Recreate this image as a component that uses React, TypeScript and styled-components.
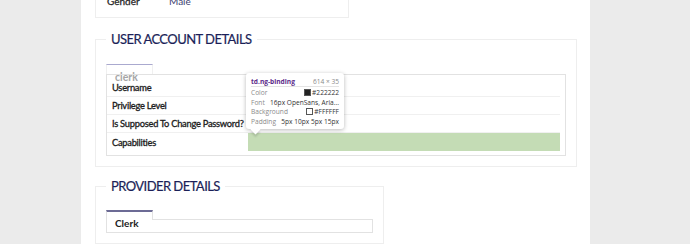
import React from 'react';
import styled, { createGlobalStyle } from 'styled-components';

const GlobalStyle = createGlobalStyle`
    html, body {
        margin: 0;
        padding: 0;
        background: #ebebeb;
        font-family: Lato, "Open Sans", "Liberation Sans", sans-serif;
        overflow: hidden;
    }
`;

const Page = styled.div`
    display: flex;
    width: 690px;
    height: 244px;
    overflow: hidden;
`;

const Gutter = styled.div<{ $w: number }>`
    width: ${(p) => p.$w}px;
    flex-shrink: 0;
    background: #ebebeb;
`;

const Main = styled.div`
    width: 509px;
    flex-shrink: 0;
    background: #ffffff;
    padding-left: 14px;
    box-sizing: border-box;
    display: flex;
    flex-direction: column;
`;

const InfoCard = styled.div`
    width: 254px;
    height: 37px;
    margin-top: -15px;
    border: 1px solid #eeeeee;
    border-top: none;
    box-sizing: border-box;
    display: flex;
    align-items: center;
    padding-left: 11px;
    font-size: 10px;
`;

const InfoLabel = styled.span`
    width: 62px;
    color: #222222;
    -webkit-text-stroke: 0.25px #222222;
`;

const InfoValue = styled.span`
    color: #3c4170;
`;

const Section = styled.fieldset<{ $w: number; $mt: number }>`
    width: ${(p) => p.$w}px;
    margin: ${(p) => p.$mt}px 0 0 0;
    padding: 0 10px 10px 10px;
    border: 1px solid #eeeeee;
    box-sizing: border-box;
    min-width: 0;
`;

const Legend = styled.legend`
    margin-left: 0;
    padding: 0 5px;
    font-size: 13px;
    line-height: 18px;
    color: #1b1f58;
    text-transform: uppercase;
    letter-spacing: -0.55px;
    -webkit-text-stroke: 0.2px #1b1f58;
`;

const TabStrip = styled.div<{ $mt: number }>`
    display: flex;
    margin-top: ${(p) => p.$mt}px;
    height: 10px;
`;

const Tab = styled.div<{ $active?: boolean }>`
    width: 47px;
    box-sizing: border-box;
    border-top: ${(p) => (p.$active ? '2px solid #6c6b95' : '1px solid #aaa9cf')};
    border-left: 1px solid ${(p) => (p.$active ? '#e2e2e2' : '#f0f0f0')};
    border-right: 1px solid ${(p) => (p.$active ? '#e2e2e2' : '#f0f0f0')};
    position: relative;
`;

const TabLabel = styled.span<{ $active?: boolean }>`
    position: absolute;
    left: 8px;
    top: ${(p) => (p.$active ? '5px' : '6px')};
    font-size: ${(p) => (p.$active ? '10px' : '10.5px')};
    line-height: 12px;
    font-weight: 700;
    color: ${(p) => (p.$active ? '#222222' : '#a6a6a6')};
    white-space: nowrap;
`;

const TabFiller = styled.div<{ $line?: boolean }>`
    flex: 1;
    border-bottom: ${(p) => (p.$line ? '1px solid #e2e2e2' : 'none')};
`;

const DetailBox = styled.div`
    position: relative;
    border: 1px solid #e2e2e2;
    padding: 4px 5px 4px 0;
`;

const Row = styled.div<{ $last?: boolean }>`
    display: grid;
    grid-template-columns: 141px 1fr;
    height: 18px;
    border-bottom: ${(p) => (p.$last ? 'none' : '1px solid #f0f0f0')};
    box-sizing: border-box;
`;

const Label = styled.div`
    padding-left: 5px;
    display: flex;
    align-items: center;
    font-size: 9.3px;
    letter-spacing: -0.25px;
    color: #1a1a1a;
    -webkit-text-stroke: 0.3px #1a1a1a;
    white-space: nowrap;
`;

const Value = styled.div<{ $highlight?: boolean }>`
    background: ${(p) => (p.$highlight ? '#c4dcb5' : 'transparent')};
`;

const ProviderBox = styled.div`
    height: 12px;
    border: 1px solid #e2e2e2;
    border-top: none;
`;

const Tooltip = styled.div`
    position: absolute;
    left: 139px;
    top: -2px;
    width: 98px;
    height: 56px;
    box-sizing: border-box;
    background: #ffffff;
    border-radius: 3px;
    box-shadow: 0 1px 4px rgba(0, 0, 0, 0.28);
    padding: 3px 5px 0 5px;
    font-family: "Open Sans", "DejaVu Sans", sans-serif;
    font-size: 6.6px;
    z-index: 2;

    &::after {
        content: '';
        position: absolute;
        left: 6px;
        bottom: -4px;
        width: 7px;
        height: 7px;
        background: #ffffff;
        transform: rotate(45deg);
        box-shadow: 2px 2px 2px rgba(0, 0, 0, 0.12);
    }
`;

const TipHead = styled.div`
    display: flex;
    justify-content: space-between;
    align-items: center;
    height: 10px;
    border-bottom: 1px solid #e4e4e4;
    margin-bottom: 1px;
`;

const TipTag = styled.span`
    font-weight: 700;
    color: #5b2a8a;
`;

const TipSize = styled.span`
    color: #8a8a8a;
`;

const TipRow = styled.div`
    display: flex;
    justify-content: space-between;
    align-items: center;
    height: 9.6px;
    color: #8a8a8a;
`;

const TipVal = styled.span`
    color: #333333;
    display: flex;
    align-items: center;
    gap: 1px;
`;

const Swatch = styled.span<{ $color: string }>`
    display: inline-block;
    width: 5px;
    height: 5px;
    background: ${(p) => p.$color};
    border: 0.5px solid #555;
`;

const accountRows = [
    'Username',
    'Privilege Level',
    'Is Supposed To Change Password?',
    'Capabilities',
];

const App = () => {
    return (
        <>
            <GlobalStyle />
            <Page>
                <Gutter $w={81} />
                <Main>
                    <InfoCard>
                        <InfoLabel>Gender</InfoLabel>
                        <InfoValue>Male</InfoValue>
                    </InfoCard>

                    <Section $w={482} $mt={12}>
                        <Legend>User Account Details</Legend>
                        <TabStrip $mt={16}>
                            <Tab>
                                <TabLabel>clerk</TabLabel>
                            </Tab>
                            <TabFiller />
                        </TabStrip>
                        <DetailBox>
                            {accountRows.map((label, i) => (
                                <Row key={label} $last={i === accountRows.length - 1}>
                                    <Label>{label}</Label>
                                    <Value $highlight={label === 'Capabilities'} />
                                </Row>
                            ))}
                            <Tooltip>
                                <TipHead>
                                    <TipTag>td.ng-binding</TipTag>
                                    <TipSize>614 × 35</TipSize>
                                </TipHead>
                                <TipRow>
                                    <span>Color</span>
                                    <TipVal><Swatch $color="#222222" />#222222</TipVal>
                                </TipRow>
                                <TipRow>
                                    <span>Font</span>
                                    <TipVal>16px OpenSans, Aria...</TipVal>
                                </TipRow>
                                <TipRow>
                                    <span>Background</span>
                                    <TipVal><Swatch $color="#ffffff" />#FFFFFF</TipVal>
                                </TipRow>
                                <TipRow>
                                    <span>Padding</span>
                                    <TipVal>5px 10px 5px 15px</TipVal>
                                </TipRow>
                            </Tooltip>
                        </DetailBox>
                    </Section>

                    <Section $w={289} $mt={10}>
                        <Legend>Provider Details</Legend>
                        <TabStrip $mt={15}>
                            <Tab $active>
                                <TabLabel $active>Clerk</TabLabel>
                            </Tab>
                            <TabFiller $line />
                        </TabStrip>
                        <ProviderBox />
                    </Section>
                </Main>
                <Gutter $w={100} />
            </Page>
        </>
    );
};

export default App;
